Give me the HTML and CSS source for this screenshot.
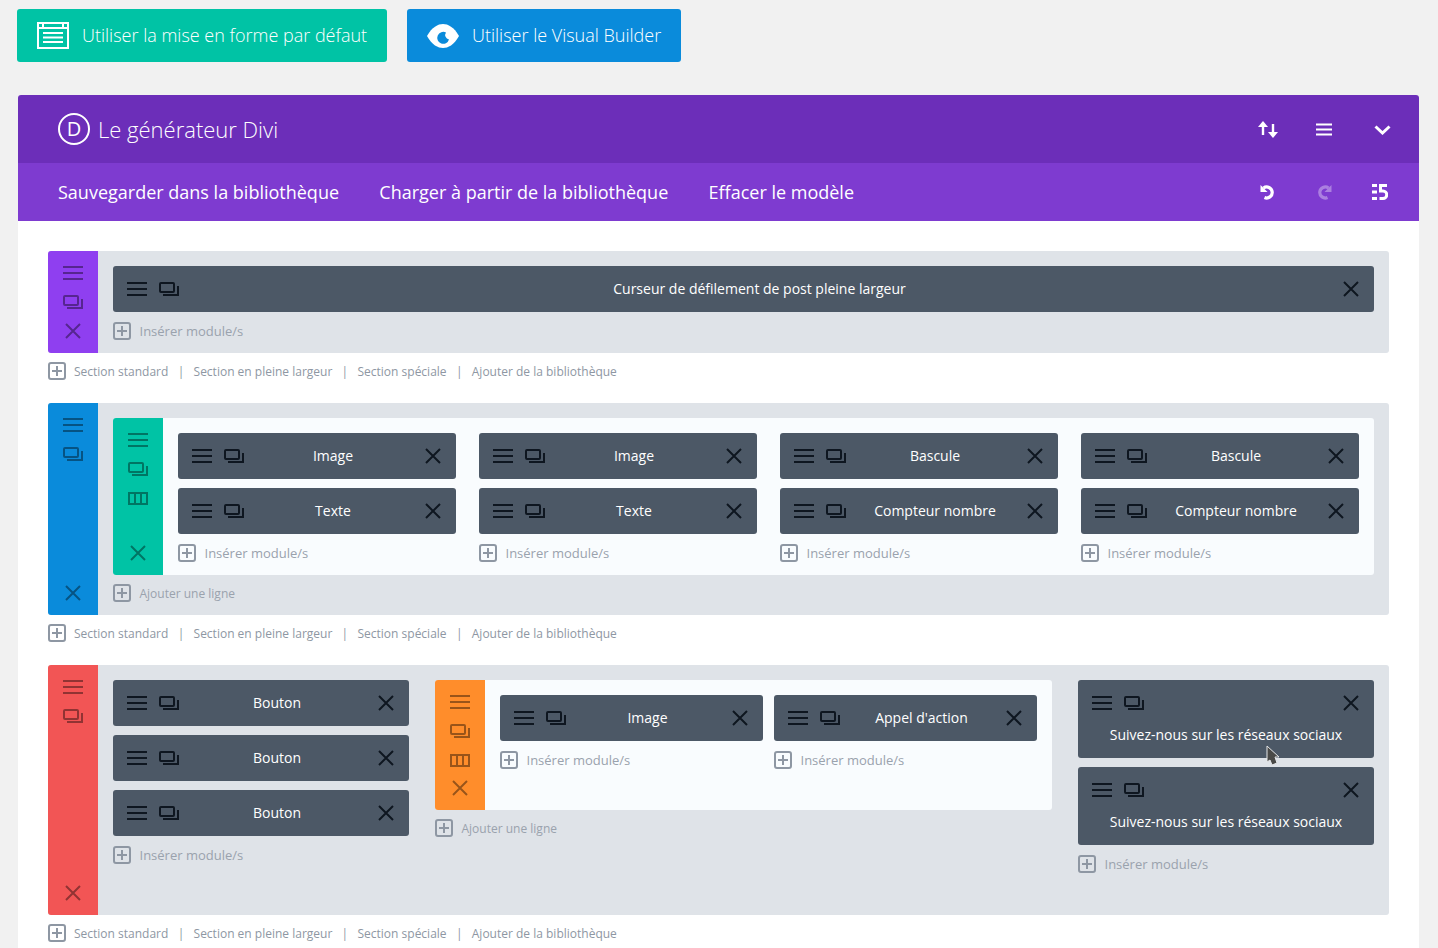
FILE: index.html
```html
<!DOCTYPE html>
<html lang="fr">
<head>
    <meta charset="UTF-8">
    <meta name="viewport" content="width=device-width, initial-scale=1.0">
    <title>Le générateur Divi</title>
    <link rel="stylesheet" href="styles.css">
</head>
<body>

<svg class="icon-defs" aria-hidden="true">
    <symbol id="i-ham" viewBox="0 0 20 14"><path d="M0 1H20M0 7H20M0 13H20" fill="none" stroke="currentColor" stroke-width="2"/></symbol>
    <symbol id="i-copy" viewBox="0 0 20 14"><rect x="1" y="1" width="14" height="9" rx="1" fill="none" stroke="currentColor" stroke-width="2"/><path d="M4 13H19V4" fill="none" stroke="currentColor" stroke-width="2"/></symbol>
    <symbol id="i-close" viewBox="0 0 16 16"><path d="M1 1L15 15M15 1L1 15" fill="none" stroke="currentColor" stroke-width="2"/></symbol>
    <symbol id="i-cols" viewBox="0 0 20 13"><path d="M1 1H19V12H1ZM7 1V12M13 1V12" fill="none" stroke="currentColor" stroke-width="2"/></symbol>
    <symbol id="i-plus" viewBox="0 0 18 18"><rect x="1" y="1" width="16" height="16" rx="2" fill="none" stroke="currentColor" stroke-width="2"/><path d="M4 9H14M9 4V14" fill="none" stroke="currentColor" stroke-width="2"/></symbol>
</svg>

<div class="top-buttons">
    <a class="big-btn btn-default">
        <svg class="btn-icon" width="32" height="27" viewBox="0 0 32 27"><path d="M1 1H31V26H1ZM1 6H31M6 1V6M26 1V6M6 11H26M6 15.500H26M6 20H26" fill="none" stroke="currentColor" stroke-width="2"/></svg>
        <span>Utiliser la mise en forme par défaut</span>
    </a>
    <a class="big-btn btn-visual">
        <svg class="btn-icon" width="32" height="24" viewBox="0 0 32 24"><path d="M0 12C5 3 11 0 16 0S27 3 32 12C27 21 21 24 16 24S5 21 0 12Z" fill="#fff"/><path d="M19 8.500A6 6 0 1 0 22 15.500 4.500 4.500 0 0 1 19 8.500Z" fill="#0a8bdb"/></svg>
        <span>Utiliser le Visual Builder</span>
    </a>
</div>

<div class="builder">
    <div class="builder-header">
        <span class="logo">D</span>
        <h1>Le générateur Divi</h1>
        <div class="header-icons">
            <svg class="arrows" width="22" height="17" viewBox="0 0 22 17"><path d="M6 14V3" fill="none" stroke="#fff" stroke-width="2.400"/><path d="M6 0L11 6H1Z" fill="#fff"/><path d="M16 3V14" fill="none" stroke="#fff" stroke-width="2.400"/><path d="M16 17L21 11H11Z" fill="#fff"/></svg>
            <svg class="hamburger" width="16" height="13" viewBox="0 0 16 13"><path d="M0 1.500H16M0 6.500H16M0 11.500H16" fill="none" stroke="#fff" stroke-width="2"/></svg>
            <svg class="chevron" width="17" height="10" viewBox="0 0 17 10"><path d="M1.500 1.500L8.500 8L15.500 1.500" fill="none" stroke="#fff" stroke-width="3"/></svg>
        </div>
    </div>
    <div class="builder-toolbar">
        <a>Sauvegarder dans la bibliothèque</a>
        <a>Charger à partir de la bibliothèque</a>
        <a>Effacer le modèle</a>
        <div class="toolbar-icons">
            <svg width="16" height="16" viewBox="0 0 16 16"><path d="M3.500 4A5.500 5.500 0 1 1 4.500 13.500" fill="none" stroke="#fff" stroke-width="3.200"/><path d="M0.500 1V8H7.500Z" fill="#fff"/></svg>
            <svg class="faded" width="16" height="16" viewBox="0 0 16 16"><path d="M12.500 4A5.500 5.500 0 1 0 11.500 13.500" fill="none" stroke="#fff" stroke-width="3.200"/><path d="M15.500 1V8H8.500Z" fill="#fff"/></svg>
            <svg class="porta" width="16" height="16" viewBox="0 0 16 16"><path d="M0 1.500H5M0 8H5M0 14.500H5" fill="none" stroke="#fff" stroke-width="3"/><path d="M15 1.500H8.500V7H11A3.500 3.500 0 0 1 11 14.500H7.500" fill="none" stroke="#fff" stroke-width="3"/></svg>
        </div>
    </div>

    <div class="builder-body">

        <!-- Section 1 -->
        <div class="section">
            <div class="side side-purple">
                <span class="side-icon"><svg class="ic-ham"><use href="#i-ham"/></svg></span>
                <span class="side-icon"><svg class="ic-copy"><use href="#i-copy"/></svg></span>
                <span class="side-icon side-close"><svg class="ic-close"><use href="#i-close"/></svg></span>
            </div>
            <div class="section-body">
                <div class="module">
                    <div class="module-tools"><svg class="ic-ham"><use href="#i-ham"/></svg><svg class="ic-copy"><use href="#i-copy"/></svg></div>
                    <span class="module-name">Curseur de défilement de post pleine largeur</span>
                    <svg class="ic-close module-x"><use href="#i-close"/></svg>
                </div>
                <div class="add-link"><svg class="ic-plus"><use href="#i-plus"/></svg>Insérer module/s</div>
            </div>
        </div>
        <div class="section-links">
            <svg class="ic-plus"><use href="#i-plus"/></svg>
            <span>Section standard</span><i>|</i><span>Section en pleine largeur</span><i>|</i><span>Section spéciale</span><i>|</i><span>Ajouter de la bibliothèque</span>
        </div>

        <!-- Section 2 -->
        <div class="section">
            <div class="side side-blue">
                <span class="side-icon"><svg class="ic-ham"><use href="#i-ham"/></svg></span>
                <span class="side-icon"><svg class="ic-copy"><use href="#i-copy"/></svg></span>
                <span class="side-icon side-close"><svg class="ic-close"><use href="#i-close"/></svg></span>
            </div>
            <div class="section-body">
                <div class="row">
                    <div class="side side-teal">
                        <span class="side-icon"><svg class="ic-ham"><use href="#i-ham"/></svg></span>
                        <span class="side-icon"><svg class="ic-copy"><use href="#i-copy"/></svg></span>
                        <span class="side-icon"><svg class="ic-cols"><use href="#i-cols"/></svg></span>
                        <span class="side-icon side-close"><svg class="ic-close"><use href="#i-close"/></svg></span>
                    </div>
                    <div class="row-body cols-4">
                        <div class="col">
                            <div class="module">
                                <div class="module-tools"><svg class="ic-ham"><use href="#i-ham"/></svg><svg class="ic-copy"><use href="#i-copy"/></svg></div>
                                <span class="module-name">Image</span>
                                <svg class="ic-close module-x"><use href="#i-close"/></svg>
                            </div>
                            <div class="module">
                                <div class="module-tools"><svg class="ic-ham"><use href="#i-ham"/></svg><svg class="ic-copy"><use href="#i-copy"/></svg></div>
                                <span class="module-name">Texte</span>
                                <svg class="ic-close module-x"><use href="#i-close"/></svg>
                            </div>
                            <div class="add-link"><svg class="ic-plus"><use href="#i-plus"/></svg>Insérer module/s</div>
                        </div>
                        <div class="col">
                            <div class="module">
                                <div class="module-tools"><svg class="ic-ham"><use href="#i-ham"/></svg><svg class="ic-copy"><use href="#i-copy"/></svg></div>
                                <span class="module-name">Image</span>
                                <svg class="ic-close module-x"><use href="#i-close"/></svg>
                            </div>
                            <div class="module">
                                <div class="module-tools"><svg class="ic-ham"><use href="#i-ham"/></svg><svg class="ic-copy"><use href="#i-copy"/></svg></div>
                                <span class="module-name">Texte</span>
                                <svg class="ic-close module-x"><use href="#i-close"/></svg>
                            </div>
                            <div class="add-link"><svg class="ic-plus"><use href="#i-plus"/></svg>Insérer module/s</div>
                        </div>
                        <div class="col">
                            <div class="module">
                                <div class="module-tools"><svg class="ic-ham"><use href="#i-ham"/></svg><svg class="ic-copy"><use href="#i-copy"/></svg></div>
                                <span class="module-name">Bascule</span>
                                <svg class="ic-close module-x"><use href="#i-close"/></svg>
                            </div>
                            <div class="module">
                                <div class="module-tools"><svg class="ic-ham"><use href="#i-ham"/></svg><svg class="ic-copy"><use href="#i-copy"/></svg></div>
                                <span class="module-name">Compteur nombre</span>
                                <svg class="ic-close module-x"><use href="#i-close"/></svg>
                            </div>
                            <div class="add-link"><svg class="ic-plus"><use href="#i-plus"/></svg>Insérer module/s</div>
                        </div>
                        <div class="col">
                            <div class="module">
                                <div class="module-tools"><svg class="ic-ham"><use href="#i-ham"/></svg><svg class="ic-copy"><use href="#i-copy"/></svg></div>
                                <span class="module-name">Bascule</span>
                                <svg class="ic-close module-x"><use href="#i-close"/></svg>
                            </div>
                            <div class="module">
                                <div class="module-tools"><svg class="ic-ham"><use href="#i-ham"/></svg><svg class="ic-copy"><use href="#i-copy"/></svg></div>
                                <span class="module-name">Compteur nombre</span>
                                <svg class="ic-close module-x"><use href="#i-close"/></svg>
                            </div>
                            <div class="add-link"><svg class="ic-plus"><use href="#i-plus"/></svg>Insérer module/s</div>
                        </div>
                    </div>
                </div>
                <div class="add-link add-line"><svg class="ic-plus"><use href="#i-plus"/></svg>Ajouter une ligne</div>
            </div>
        </div>
        <div class="section-links">
            <svg class="ic-plus"><use href="#i-plus"/></svg>
            <span>Section standard</span><i>|</i><span>Section en pleine largeur</span><i>|</i><span>Section spéciale</span><i>|</i><span>Ajouter de la bibliothèque</span>
        </div>

        <!-- Section 3 -->
        <div class="section">
            <div class="side side-red">
                <span class="side-icon"><svg class="ic-ham"><use href="#i-ham"/></svg></span>
                <span class="side-icon"><svg class="ic-copy"><use href="#i-copy"/></svg></span>
                <span class="side-icon side-close"><svg class="ic-close"><use href="#i-close"/></svg></span>
            </div>
            <div class="section-body special">
                <div class="col">
                    <div class="module">
                        <div class="module-tools"><svg class="ic-ham"><use href="#i-ham"/></svg><svg class="ic-copy"><use href="#i-copy"/></svg></div>
                        <span class="module-name">Bouton</span>
                        <svg class="ic-close module-x"><use href="#i-close"/></svg>
                    </div>
                    <div class="module">
                        <div class="module-tools"><svg class="ic-ham"><use href="#i-ham"/></svg><svg class="ic-copy"><use href="#i-copy"/></svg></div>
                        <span class="module-name">Bouton</span>
                        <svg class="ic-close module-x"><use href="#i-close"/></svg>
                    </div>
                    <div class="module">
                        <div class="module-tools"><svg class="ic-ham"><use href="#i-ham"/></svg><svg class="ic-copy"><use href="#i-copy"/></svg></div>
                        <span class="module-name">Bouton</span>
                        <svg class="ic-close module-x"><use href="#i-close"/></svg>
                    </div>
                    <div class="add-link"><svg class="ic-plus"><use href="#i-plus"/></svg>Insérer module/s</div>
                </div>
                <div class="col">
                    <div class="row">
                        <div class="side side-orange">
                            <span class="side-icon"><svg class="ic-ham"><use href="#i-ham"/></svg></span>
                            <span class="side-icon"><svg class="ic-copy"><use href="#i-copy"/></svg></span>
                            <span class="side-icon"><svg class="ic-cols"><use href="#i-cols"/></svg></span>
                            <span class="side-icon side-close"><svg class="ic-close"><use href="#i-close"/></svg></span>
                        </div>
                        <div class="row-body cols-2">
                            <div class="col">
                                <div class="module">
                                    <div class="module-tools"><svg class="ic-ham"><use href="#i-ham"/></svg><svg class="ic-copy"><use href="#i-copy"/></svg></div>
                                    <span class="module-name">Image</span>
                                    <svg class="ic-close module-x"><use href="#i-close"/></svg>
                                </div>
                                <div class="add-link"><svg class="ic-plus"><use href="#i-plus"/></svg>Insérer module/s</div>
                            </div>
                            <div class="col">
                                <div class="module">
                                    <div class="module-tools"><svg class="ic-ham"><use href="#i-ham"/></svg><svg class="ic-copy"><use href="#i-copy"/></svg></div>
                                    <span class="module-name">Appel d'action</span>
                                    <svg class="ic-close module-x"><use href="#i-close"/></svg>
                                </div>
                                <div class="add-link"><svg class="ic-plus"><use href="#i-plus"/></svg>Insérer module/s</div>
                            </div>
                        </div>
                    </div>
                    <div class="add-link add-line"><svg class="ic-plus"><use href="#i-plus"/></svg>Ajouter une ligne</div>
                </div>
                <div class="col">
                    <div class="module module-tall">
                        <div class="module-tools"><svg class="ic-ham"><use href="#i-ham"/></svg><svg class="ic-copy"><use href="#i-copy"/></svg></div>
                        <svg class="ic-close module-x"><use href="#i-close"/></svg>
                        <span class="module-name">Suivez-nous sur les réseaux sociaux</span>
                        <svg class="cursor" width="14" height="21" viewBox="0 0 14 21"><path d="M1 1L13 12H9L11 18L6 20L4 15L1 17Z" fill="#4a4a48" stroke="#e4e6e8" stroke-width="1"/></svg>
                    </div>
                    <div class="module module-tall">
                        <div class="module-tools"><svg class="ic-ham"><use href="#i-ham"/></svg><svg class="ic-copy"><use href="#i-copy"/></svg></div>
                        <svg class="ic-close module-x"><use href="#i-close"/></svg>
                        <span class="module-name">Suivez-nous sur les réseaux sociaux</span>
                    </div>
                    <div class="add-link"><svg class="ic-plus"><use href="#i-plus"/></svg>Insérer module/s</div>
                </div>
            </div>
        </div>
        <div class="section-links">
            <svg class="ic-plus"><use href="#i-plus"/></svg>
            <span>Section standard</span><i>|</i><span>Section en pleine largeur</span><i>|</i><span>Section spéciale</span><i>|</i><span>Ajouter de la bibliothèque</span>
        </div>

    </div>
</div>

</body>
</html>
```

FILE: styles.css
```css
/* Basic Reset */
* {
    margin: 0;
    padding: 0;
    box-sizing: border-box;
}
body {
    font-family: "Open Sans", sans-serif;
    background-color: #f1f1f1;
    color: #fff;
    padding: 9px 19px 0 17px;
}
.icon-defs {
    display: none;
}

/* Top buttons */
.top-buttons {
    display: flex;
    gap: 20px;
    margin-bottom: 33px;
}
.big-btn {
    display: flex;
    align-items: center;
    height: 53px;
    border-radius: 3px;
    font-size: 18px;
    font-weight: 300;
    color: #fff;
}
.big-btn span {
    padding-bottom: 2px;
}
.btn-default {
    width: 370px;
    padding-left: 20px;
    gap: 13px;
    background-color: #00c3a5;
}
.btn-visual {
    width: 274px;
    padding-left: 20px;
    gap: 13px;
    background-color: #0a8bdb;
}

/* Builder header */
.builder {
    margin-left: 1px;
    background-color: #fff;
    border-radius: 3px 3px 0 0;
}
.builder-header {
    display: flex;
    align-items: center;
    height: 68px;
    padding: 0 28px 0 40px;
    background-color: #6c2eb9;
    border-radius: 3px 3px 0 0;
}
.logo {
    width: 32px;
    height: 32px;
    margin-right: 8px;
    border: 2px solid #fff;
    border-radius: 50%;
    font-size: 20px;
    line-height: 27px;
    text-align: center;
}
.builder-header h1 {
    font-size: 22px;
    font-weight: 300;
}
.header-icons {
    display: flex;
    align-items: center;
    margin-left: auto;
}
.hamburger {
    margin-left: 37px;
}
.chevron {
    margin-left: 42px;
    margin-top: 1px;
}
.builder-toolbar {
    display: flex;
    align-items: center;
    gap: 40.3px;
    height: 58px;
    padding: 0 31px 0 40px;
    background-color: #7e3bd0;
    font-size: 18px;
}
.toolbar-icons {
    display: flex;
    gap: 40px;
    margin-left: auto;
}
.faded {
    opacity: 0.35;
}

/* Sections */
.builder-body {
    padding: 30px 30px 5px;
}
.section {
    display: flex;
    background-color: #dfe3e8;
    border-radius: 3px;
}
.section-body {
    flex: 1;
    min-width: 0;
    padding: 15px 15px 12px;
}
.special {
    display: grid;
    grid-template-columns: 296px 1fr 296px;
    gap: 26px;
    padding-bottom: 41px;
}
.section-links {
    display: flex;
    align-items: center;
    height: 20px;
    margin: 8px 0 22px;
    font-size: 12px;
    color: #8e97a3;
}
.section-links:last-child {
    margin-bottom: 0;
}
.section-links .ic-plus {
    margin-right: 8px;
}
.section-links i {
    margin: 0 9.3px;
    font-style: normal;
}

/* Sidebars */
.side {
    display: flex;
    flex-direction: column;
    flex: none;
    width: 50px;
    padding: 8px 0;
    border-radius: 3px 0 0 3px;
    color: rgba(0, 0, 0, 0.4);
}
.side-purple { background-color: #8f3ff0; }
.side-blue { background-color: #0a8bdb; }
.side-teal { background-color: #00c3a5; }
.side-red { background-color: #f25555; }
.side-orange { background-color: #ff8d2b; }
.side-icon {
    display: flex;
    align-items: center;
    justify-content: center;
    height: 28px;
}
.side-icon + .side-icon {
    margin-top: 1px;
}
.side-icon.side-close {
    margin-top: auto;
}

/* Icons */
svg {
    flex: none;
    display: block;
}
.ic-ham {
    width: 20px;
    height: 14px;
}
.ic-copy {
    width: 20px;
    height: 14px;
}
.ic-close {
    width: 16px;
    height: 16px;
}
.ic-cols {
    width: 20px;
    height: 13px;
}
.ic-plus {
    width: 18px;
    height: 18px;
    color: #8e97a3;
}

/* Rows */
.row {
    display: flex;
    background-color: #f9fcfe;
    border-radius: 3px;
}
.row-body {
    flex: 1;
    display: grid;
    padding: 15px 15px 12px;
}
.cols-4 {
    grid-template-columns: repeat(4, 1fr);
    gap: 23px;
}
.cols-2 {
    grid-template-columns: repeat(2, 1fr);
    gap: 11px;
}
.col {
    min-width: 0;
}

/* Modules */
.module {
    position: relative;
    display: flex;
    align-items: center;
    height: 46px;
    margin-bottom: 9px;
    background-color: #4c5866;
    border-radius: 3px;
    font-size: 14px;
    color: #0e1620;
}
.module-tools {
    display: flex;
    align-items: center;
    gap: 12px;
    flex: none;
    width: 67px;
    padding-left: 14px;
}
.module-name {
    flex: 1;
    padding-bottom: 2px;
    text-align: center;
    color: #fff;
}
.module-x {
    flex: none;
    margin: 0 15px 0 4px;
}
.module-tall {
    flex-wrap: wrap;
    justify-content: space-between;
    height: 78px;
    padding-top: 15px;
    align-content: flex-start;
}
.module-tall .module-name {
    flex: 0 0 100%;
    margin-top: 14px;
}
.cursor {
    position: absolute;
    left: 188px;
    top: 65px;
}

/* Add links */
.add-link {
    display: flex;
    align-items: center;
    gap: 8.5px;
    height: 20px;
    font-size: 13px;
    color: #9aa2ad;
}
.add-line {
    margin-top: 8px;
    font-size: 12px;
}
```
